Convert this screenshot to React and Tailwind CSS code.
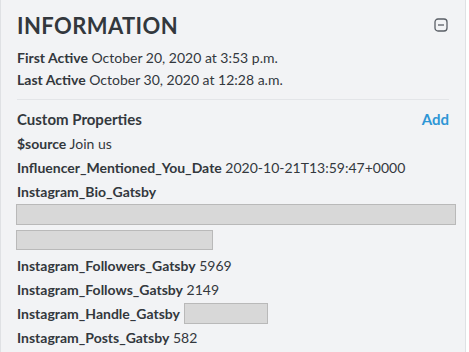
import React from 'react';

const props = [
  { key: '$source', value: 'Join us' },
  { key: 'Influencer_Mentioned_You_Date', value: '2020-10-21T13:59:47+0000' },
];

function Row({ label, children }) {
  return (
    <div className="h-6 flex items-center">
      <span className="font-bold">{label}</span>
      {children}
    </div>
  );
}

function Redacted({ className }) {
  return <div className={`bg-[#d8d8d8] border border-[#b9b9b9] ${className}`} />;
}

export default function App() {
  return (
    <div className="w-[469px] h-[352px] bg-white overflow-hidden" style={{ fontFamily: 'Lato, "Open Sans", sans-serif' }}>
      <div className="w-[466px] h-full bg-[#f2f3f5] border-l border-r border-[#dfe1e4] text-[#33383d] text-[14px]">
        <div className="px-4 pt-[11px]">
          <div className="flex items-center justify-between h-[28px]">
            <h2 className="text-[22px] font-bold tracking-[0.4px] text-[#33383d]">INFORMATION</h2>
            <svg width="14" height="14" viewBox="0 0 14 14" className="mr-[1px]">
              <rect x="1" y="1" width="12" height="12" rx="3" fill="none" stroke="#5a5f66" strokeWidth="1.3" />
              <line x1="4" y1="7" x2="10" y2="7" stroke="#5a5f66" strokeWidth="1.3" />
            </svg>
          </div>
          <div className="mt-[7px] h-[22px] flex items-center">
            <span className="font-bold">First Active</span>&nbsp;October 20, 2020 at 3:53 p.m.
          </div>
          <div className="h-[22px] flex items-center">
            <span className="font-bold">Last Active</span>&nbsp;October 30, 2020 at 12:28 a.m.
          </div>
        </div>
        <div className="mx-4 mt-[9px] border-t border-[#e3e5e8]" />
        <div className="px-4 pt-[7px]">
          <div className="flex items-center justify-between h-6">
            <span className="font-bold text-[15px]">Custom Properties</span>
            <button className="font-bold text-[15px] text-[#2e96d5]">Add</button>
          </div>
          {props.map((p) => (
            <Row key={p.key} label={p.key}>&nbsp;{p.value}</Row>
          ))}
          <Row label="Instagram_Bio_Gatsby" />
          <Redacted className="mt-[1px] h-[21px] w-[440px] -ml-[1px]" />
          <Redacted className="mt-[5px] h-[20px] w-[197px] -ml-[1px]" />
          <div className="mt-[3px]">
            <Row label="Instagram_Followers_Gatsby">&nbsp;5969</Row>
            <Row label="Instagram_Follows_Gatsby">&nbsp;2149</Row>
            <Row label="Instagram_Handle_Gatsby">
              &nbsp;<Redacted className="h-[21px] w-[84px]" />
            </Row>
            <Row label="Instagram_Posts_Gatsby">&nbsp;582</Row>
          </div>
        </div>
      </div>
    </div>
  );
}
